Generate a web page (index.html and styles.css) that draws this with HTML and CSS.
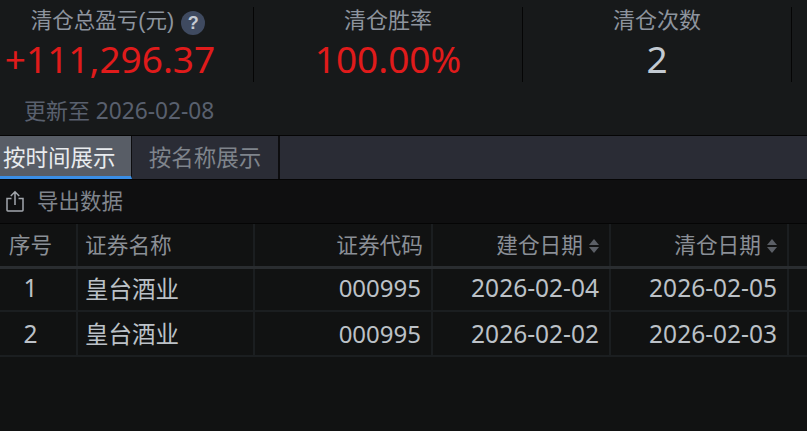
FILE: index.html
```html
<!DOCTYPE html>
<html lang="zh-CN">
<head>
    <meta charset="UTF-8">
    <title>清仓统计</title>
    <link rel="stylesheet" href="styles.css">
</head>
<body>
    <!-- 顶部统计 -->
    <div class="summary">
        <div class="stats">
            <div class="stat stat-first">
                <div class="stat-label">清仓总盈亏(元)<i class="help">?</i></div>
                <div class="stat-value up value-shift">+111,296.37</div>
            </div>
            <div class="stat">
                <div class="stat-label">清仓胜率</div>
                <div class="stat-value up">100.00%</div>
            </div>
            <div class="stat">
                <div class="stat-label">清仓次数</div>
                <div class="stat-value">2</div>
            </div>
        </div>
        <div class="update">更新至 <span class="update-date">2026-02-08</span></div>
    </div>

    <!-- 标签 -->
    <div class="tabs">
        <div class="tab active">按时间展示</div>
        <div class="tab">按名称展示</div>
    </div>

    <!-- 工具栏 -->
    <div class="toolbar">
        <svg class="export-icon" width="20" height="22" viewBox="0 0 20 22" fill="none" stroke="#a3a7ad" stroke-width="1.5">
            <path d="M6.5 8.5H2V20.2Q2 20.9 2.8 20.9H17.2Q18 20.9 18 20.2V8.5H13.5"/>
            <path d="M10 15V1.8M5.8 6L10 1.8L14.2 6"/>
        </svg>
        <span class="toolbar-text">导出数据</span>
    </div>

    <!-- 表格 -->
    <table class="grid">
        <thead>
            <tr>
                <th class="c-no">序号</th>
                <th class="c-name left">证券名称</th>
                <th class="c-code">证券代码</th>
                <th class="c-date">建仓日期<i class="sort"></i></th>
                <th class="c-date">清仓日期<i class="sort"></i></th>
                <th></th>
            </tr>
        </thead>
        <tbody>
            <tr>
                <td class="no">1</td>
                <td class="left name">皇台酒业</td>
                <td class="code">000995</td>
                <td>2026-02-04</td>
                <td>2026-02-05</td>
                <td></td>
            </tr>
            <tr>
                <td class="no">2</td>
                <td class="left name">皇台酒业</td>
                <td class="code">000995</td>
                <td>2026-02-02</td>
                <td>2026-02-03</td>
                <td></td>
            </tr>
        </tbody>
    </table>
</body>
</html>
```

FILE: styles.css
```css
*{
    box-sizing: border-box;
}
html,body{
    height: 100%;
}
body{
    margin: 0;
    overflow: hidden;
    background-color: #111212;
    color: #b9bec4;
    font-family: "Noto Sans", "Noto Sans CJK SC", sans-serif;
}

/* 顶部统计 */
.summary{
    height: 135px;
    padding-top: 7px;
    background-color: #17191a;
}
.stats{
    display: flex;
    height: 75px;
}
.stat{
    width: 269px;
    border-right: 1px solid #050505;
    text-align: center;
}
.stat-first{
    width: 254px;
    padding-right: 17px;
}
.stat-label{
    height: 30px;
    font-family: "Liberation Sans", "Noto Sans CJK SC", sans-serif;
    font-size: 22px;
    line-height: 28px;
    color: #8d949e;
}
.stat-first .stat-label{
    font-size: 21.5px;
}
.stat-value{
    height: 45px;
    font-size: 37px;
    line-height: 44px;
    color: #c3cad2;
}
.up{
    color: #e01b1b;
}
.value-shift{
    margin-left: -16px;
}
.help{
    display: inline-block;
    width: 24px;
    height: 24px;
    margin-left: 7px;
    border-radius: 50%;
    background-color: #3f4a60;
    font-size: 18px;
    font-style: normal;
    font-weight: bold;
    line-height: 24px;
    color: #c5cad3;
    vertical-align: -1px;
}
.update{
    margin-top: 13px;
    padding-left: 24px;
    font-size: 22px;
    line-height: 30px;
    color: #59606e;
}
.update-date{
    font-size: 22.7px;
}

/* 标签 */
.tabs{
    display: flex;
    height: 45px;
    border-top: 1px solid #050505;
    border-bottom: 1px solid #050505;
    background-color: #2a2c35;
}
.tab{
    width: 148px;
    border-right: 2px solid #0d0d0f;
    font-size: 22.5px;
    line-height: 43px;
    text-align: center;
    color: #7f848c;
}
.tab.active{
    width: 132px;
    border-right: 1px solid #0d0d0f;
    border-bottom: 3px solid #3a8ee6;
    background-color: #585d66;
    color: #e8ebee;
    text-align: left;
    padding-left: 3px;
}

/* 工具栏 */
.toolbar{
    display: flex;
    align-items: center;
    gap: 12px;
    height: 44px;
    padding-left: 5px;
    border-bottom: 1px solid #050505;
    background-color: #0f0f10;
    font-size: 21.5px;
    color: #7f848c;
}
.toolbar-text{
    padding-bottom: 4px;
}
.export-icon{
    margin-bottom: 2px;
}

/* 表格 */
.grid{
    width: 807px;
    table-layout: fixed;
    border-collapse: collapse;
    background-color: #111212;
}
.grid th,.grid td{
    padding: 0 10px;
    border-right: 2px solid #1b1e20;
    text-align: right;
    white-space: nowrap;
}
.grid th{
    height: 43px;
    padding-bottom: 2px;
    border-bottom: 3px solid #2a2d30;
    font-size: 21.7px;
    font-weight: normal;
    color: #8a8f96;
}
.grid td{
    height: 44px;
    padding-bottom: 3px;
    border-bottom: 2px solid #1b1e20;
    font-size: 24.5px;
    color: #bcc1c7;
}
.grid tr:last-child td{
    height: 45px;
    padding-bottom: 1px;
}
.grid th:last-child,.grid td:last-child{
    border-right: none;
}
.grid .c-no,.grid .no{
    padding-left: 0;
    padding-right: 15px;
    text-align: center;
}
.c-no{
    width: 77px;
}
.c-name{
    width: 177px;
}
.c-code{
    width: 178px;
}
.c-date{
    width: 178px;
}
.grid .c-code{
    padding-right: 8px;
}
.grid .code{
    font-size: 24px;
}
.grid .left{
    padding-left: 7px;
    text-align: left;
}
.grid .name{
    font-size: 23.5px;
}
.sort{
    display: inline-block;
    position: relative;
    width: 10px;
    height: 16px;
    margin-left: 6px;
    vertical-align: -1px;
}
.sort::before,.sort::after{
    content: "";
    position: absolute;
    left: 0;
    border-left: 5px solid transparent;
    border-right: 5px solid transparent;
}
.sort::before{
    top: 1px;
    border-bottom: 6px solid #5b5f66;
}
.sort::after{
    bottom: 1px;
    border-top: 6px solid #5b5f66;
}
```
